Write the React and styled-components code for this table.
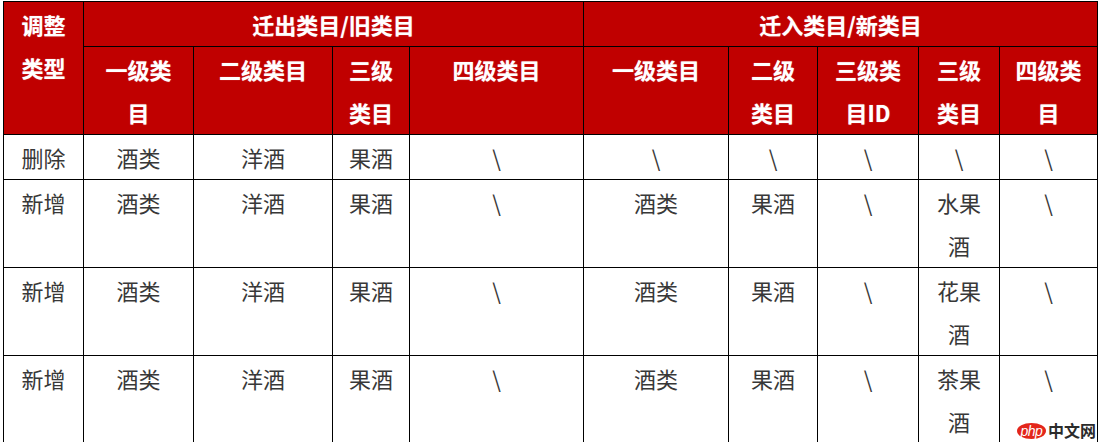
import React from "react";
import styled, { createGlobalStyle } from "styled-components";

const GlobalStyle = createGlobalStyle`
  html, body {
    margin: 0;
    padding: 0;
    background: #fff;
    overflow: hidden;
  }
  body {
    font-family: "Noto Sans CJK SC", "Noto Sans", sans-serif;
  }
`;

const Page = styled.div`
  position: relative;
  width: 1099px;
  height: 442px;
  overflow: hidden;
  padding: 1px 0 0 3px;
  box-sizing: border-box;
`;

const Table = styled.table`
  border-collapse: collapse;
  table-layout: fixed;
  width: 1094px;
  font-size: 22px;
  line-height: 43px;
`;

const Head = styled.th`
  background: #c00000;
  color: #fff;
  font-weight: 700;
  border: 1px solid #000;
  padding: 1px 0 0;
  text-align: center;
  vertical-align: top;
  white-space: nowrap;
  text-shadow: 0 0 1px rgba(255, 255, 255, 0.6);
`;

const Cell = styled.td`
  color: #383838;
  border: 1px solid #000;
  padding: 1px 0 0;
  text-align: center;
  vertical-align: top;
  white-space: nowrap;
`;

const Watermark = styled.div`
  position: absolute;
  right: 3px;
  bottom: 3px;
  display: flex;
  align-items: center;
  gap: 2px;
`;

const PhpBadge = styled.span`
  display: inline-flex;
  align-items: center;
  justify-content: center;
  width: 29px;
  height: 16px;
  background: #e3261b;
  color: #fff;
  font-family: "Liberation Sans", Arial, sans-serif;
  font-size: 14px;
  font-style: italic;
  letter-spacing: -0.5px;
  border-radius: 50%;
`;

const SiteName = styled.span`
  color: #2b2b2b;
  font-size: 16px;
  line-height: 17px;
  font-weight: 700;
`;

const widths = [80, 110, 139, 77, 174, 145, 89, 101, 81, 98];

const rows = [
  ["删除", "酒类", "洋酒", "果酒", "\\", "\\", "\\", "\\", "\\", "\\"],
  ["新增", "酒类", "洋酒", "果酒", "\\", "酒类", "果酒", "\\", ["水果", "酒"], "\\"],
  ["新增", "酒类", "洋酒", "果酒", "\\", "酒类", "果酒", "\\", ["花果", "酒"], "\\"],
  ["新增", "酒类", "洋酒", "果酒", "\\", "酒类", "果酒", "\\", ["茶果", "酒"], "\\"],
];

const subHeads = [
  ["一级类", "目"],
  ["二级类目"],
  ["三级", "类目"],
  ["四级类目"],
  ["一级类目"],
  ["二级", "类目"],
  ["三级类", "目ID"],
  ["三级", "类目"],
  ["四级类", "目"],
];

const Lines = ({ lines }) =>
  lines.map((line, i) => (
    <React.Fragment key={i}>
      {i > 0 && <br />}
      {line}
    </React.Fragment>
  ));

const App = () => {
  return (
    <Page>
      <GlobalStyle />
      <Table>
        <colgroup>
          {widths.map((w, i) => (
            <col key={i} style={{ width: w }} />
          ))}
        </colgroup>
        <thead>
          <tr>
            <Head rowSpan={2}>
              调整
              <br />
              类型
            </Head>
            <Head colSpan={4}>迁出类目/旧类目</Head>
            <Head colSpan={5}>迁入类目/新类目</Head>
          </tr>
          <tr>
            {subHeads.map((h, i) => (
              <Head key={i}>
                <Lines lines={h} />
              </Head>
            ))}
          </tr>
        </thead>
        <tbody>
          {rows.map((row, r) => (
            <tr key={r}>
              {row.map((c, i) => (
                <Cell key={i}>
                  <Lines lines={Array.isArray(c) ? c : [c]} />
                </Cell>
              ))}
            </tr>
          ))}
        </tbody>
      </Table>
      <Watermark>
        <PhpBadge>php</PhpBadge>
        <SiteName>中文网</SiteName>
      </Watermark>
    </Page>
  );
};

export default App;
